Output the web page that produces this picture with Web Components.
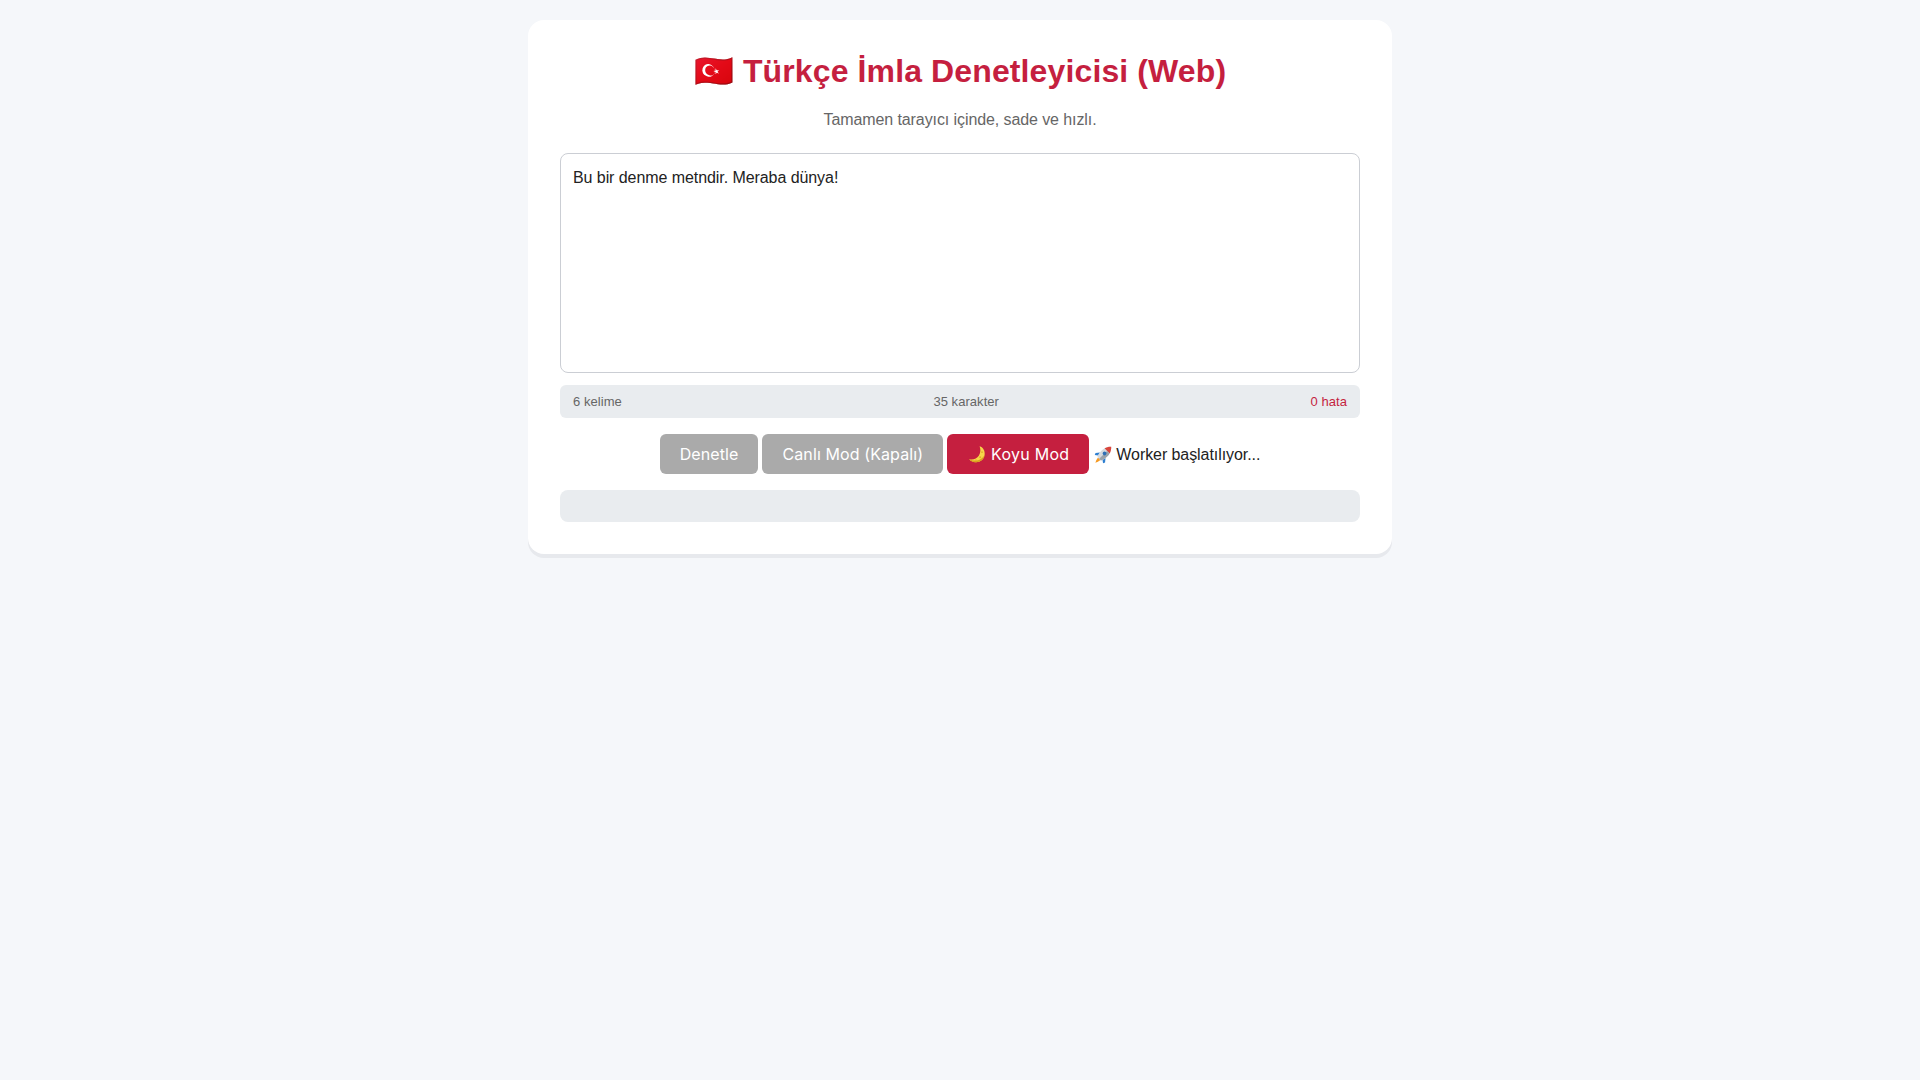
<!DOCTYPE html>
<html lang="tr">
<head>
<meta charset="utf-8">
<title>Türkçe İmla Denetleyicisi (Web)</title>
<style>
    html, body { margin: 0; height: 100%; }
    body {
        background: #f5f7fa;
        font-family: "Liberation Sans", Arial, sans-serif;
        font-size: 16px;
        color: #222;
    }
</style>
</head>
<body>
<spell-app></spell-app>

<script>
/* Kart: sayfanin ortasindaki beyaz kutu */
class SpellCard extends HTMLElement {
    constructor() {
        super();
        this.attachShadow({ mode: 'open' });
        this.shadowRoot.innerHTML = `
            <style>
                :host {
                    display: block;
                    box-sizing: border-box;
                    width: 864px;
                    margin: 20px auto 0;
                    padding: 32px;
                    background: #ffffff;
                    border-radius: 16px;
                    box-shadow: 0 4px 0 #e7e9ed;
                }
            </style>
            <slot></slot>
        `;
    }
}

class SpellHeader extends HTMLElement {
    constructor() {
        super();
        this.attachShadow({ mode: 'open' });
        this.shadowRoot.innerHTML = `
            <style>
                :host { display: block; text-align: center; }
                h1 {
                    margin: 0;
                    font-size: 32px;
                    line-height: 39px;
                    font-weight: 700;
                    letter-spacing: 0.12px;
                    color: #c51f3f;
                }
                p {
                    margin: 20px 0 0;
                    font-size: 16px;
                    line-height: 18px;
                    letter-spacing: -0.09px;
                    color: #666666;
                }
            </style>
            <h1><slot name="title"></slot></h1>
            <p><slot name="sub"></slot></p>
        `;
    }
}

class SpellEditor extends HTMLElement {
    constructor() {
        super();
        this.attachShadow({ mode: 'open' });
        this.shadowRoot.innerHTML = `
            <style>
                :host { display: block; margin-top: 24px; }
                textarea {
                    display: block;
                    box-sizing: border-box;
                    width: 800px;
                    height: 220px;
                    padding: 12px;
                    border: 1px solid #cbced4;
                    border-radius: 8px;
                    background: #ffffff;
                    color: #222222;
                    font-family: "Liberation Sans", Arial, sans-serif;
                    font-size: 16px;
                    line-height: 23px;
                    letter-spacing: -0.07px;
                    outline: none;
                    resize: none;
                }
            </style>
            <textarea spellcheck="false"></textarea>
        `;
    }
    connectedCallback() {
        this.shadowRoot.querySelector('textarea').value = this.getAttribute('value') || '';
    }
}

class SpellStats extends HTMLElement {
    constructor() {
        super();
        this.attachShadow({ mode: 'open' });
        this.shadowRoot.innerHTML = `
            <style>
                :host {
                    display: flex;
                    justify-content: space-between;
                    align-items: center;
                    height: 33px;
                    margin-top: 12px;
                    padding: 0 13px;
                    background: #e9ecef;
                    border-radius: 6px;
                    font-size: 13px;
                    letter-spacing: 0.05px;
                    color: #666666;
                }
                .err { color: #c51f3f; }
            </style>
            <span><slot name="words"></slot></span>
            <span><slot name="chars"></slot></span>
            <span class="err"><slot name="errors"></slot></span>
        `;
    }
}

// Ay ve roket simgeleri
const ICONS = {
    moon: `
        <path d="M10.6 .3 C14.4 1.6 16.2 5.2 15.6 9 C14.9 13.6 10.8 16.6 6.4 16.2 C3.8 16 1.4 14.9 .2 13.2 C4 14.2 7.8 12.8 9.8 9.8 C11.6 7 11.9 3.4 10.6 .3 Z" fill="#f7d64a"/>
        <path d="M.2 13.2 C1.4 14.9 3.8 16 6.4 16.2 C10.8 16.6 14.9 13.6 15.6 9 C13.6 12.6 9.8 14.8 6 14.6 C3.8 14.5 1.8 14 .2 13.2 Z" fill="#d8a21e"/>
        <circle cx="13" cy="6.2" r=".9" fill="#e0b02c"/>
        <circle cx="11.2" cy="11.2" r="1" fill="#e0b02c"/>
        <circle cx="7" cy="14" r=".7" fill="#e0b02c"/>
    `,
    rocket: `
        <g transform="rotate(45 8.5 8.5)">
            <path d="M4.6 9.5 L1.8 13 L2.6 15 L5.4 13 Z" fill="#2f7fd0"/>
            <path d="M12.4 9.5 L15.2 13 L14.4 15 L11.6 13 Z" fill="#2f7fd0"/>
            <path d="M6.8 14.5 L10.2 14.5 L9.6 17.5 L8.5 20 L7.4 17.5 Z" fill="#f59a23"/>
            <path d="M8.5 -2.4 C11.6 .4 12.6 4 12.6 7.4 C12.6 10 12 12.6 11 14.6 L6 14.6 C5 12.6 4.4 10 4.4 7.4 C4.4 4 5.4 .4 8.5 -2.4 Z" fill="#d5d9de"/>
            <path d="M8.5 -2.4 C10.4 -.7 11.5 1.3 12.1 3.4 L4.9 3.4 C5.5 1.3 6.6 -.7 8.5 -2.4 Z" fill="#d9453c"/>
            <path d="M8.5 3.4 L12.1 3.4 C12.5 4.7 12.6 6 12.6 7.4 C12.6 10 12 12.6 11 14.6 L8.5 14.6 Z" fill="#9aa2ab"/>
            <circle cx="8.5" cy="7" r="1.9" fill="#2f6fb5"/>
        </g>
    `
};

class SpellIcon extends HTMLElement {
    constructor() {
        super();
        this.attachShadow({ mode: 'open' });
    }
    connectedCallback() {
        const name = this.getAttribute('name');
        this.shadowRoot.innerHTML = `
            <style>
                :host { display: inline-block; width: 17px; height: 17px; }
                svg { display: block; overflow: visible; }
            </style>
            <svg width="17" height="17" viewBox="0 0 17 17" aria-hidden="true">${ICONS[name]}</svg>
        `;
    }
}

class SpellButton extends HTMLElement {
    constructor() {
        super();
        this.attachShadow({ mode: 'open' });
        this.shadowRoot.innerHTML = `
            <style>
                :host { display: block; }
                button {
                    display: flex;
                    align-items: center;
                    height: 40px;
                    padding: 0 20px;
                    border: 0;
                    border-radius: 6px;
                    background: #aaaaaa;
                    color: #ffffff;
                    font-family: Inter, "Liberation Sans", sans-serif;
                    font-size: 16px;
                    font-weight: 400;
                    letter-spacing: 0.1px;
                }
                :host([primary]) button {
                    gap: 5px;
                    background: #c51f3f;
                    letter-spacing: 0.25px;
                }
                ::slotted([slot="icon"]) { margin-left: 2px; }
            </style>
            <button><slot name="icon"></slot><slot></slot></button>
        `;
    }
}

class SpellToolbar extends HTMLElement {
    constructor() {
        super();
        this.attachShadow({ mode: 'open' });
        this.shadowRoot.innerHTML = `
            <style>
                :host {
                    display: flex;
                    justify-content: center;
                    align-items: center;
                    gap: 4px;
                    margin-top: 16px;
                }
                ::slotted(.status) {
                    display: flex;
                    align-items: center;
                    gap: 4px;
                    margin-left: 2px;
                    padding-top: 1px;
                    letter-spacing: -0.07px;
                }
            </style>
            <slot></slot>
        `;
    }
}

class SpellResults extends HTMLElement {
    constructor() {
        super();
        this.attachShadow({ mode: 'open' });
        this.shadowRoot.innerHTML = `
            <style>
                :host {
                    display: block;
                    height: 32px;
                    margin-top: 16px;
                    background: #e9ecef;
                    border-radius: 8px;
                }
            </style>
            <slot></slot>
        `;
    }
}

class SpellApp extends HTMLElement {
    constructor() {
        super();
        this.attachShadow({ mode: 'open' });
        this.shadowRoot.innerHTML = `
            <style>
                :host { display: block; padding-bottom: 20px; }
            </style>
            <spell-card>
                <spell-header>
                    <span slot="title">🇹🇷 Türkçe İmla Denetleyicisi (Web)</span>
                    <span slot="sub">Tamamen tarayıcı içinde, sade ve hızlı.</span>
                </spell-header>
                <spell-editor value="Bu bir denme metndir. Meraba dünya!"></spell-editor>
                <spell-stats>
                    <span slot="words">6 kelime</span>
                    <span slot="chars">35 karakter</span>
                    <span slot="errors">0 hata</span>
                </spell-stats>
                <spell-toolbar>
                    <spell-button>Denetle</spell-button>
                    <spell-button>Canlı Mod (Kapalı)</spell-button>
                    <spell-button primary><spell-icon slot="icon" name="moon"></spell-icon>Koyu Mod</spell-button>
                    <span class="status"><spell-icon name="rocket"></spell-icon>Worker başlatılıyor...</span>
                </spell-toolbar>
                <spell-results></spell-results>
            </spell-card>
        `;
    }
}

customElements.define('spell-card', SpellCard);
customElements.define('spell-header', SpellHeader);
customElements.define('spell-editor', SpellEditor);
customElements.define('spell-stats', SpellStats);
customElements.define('spell-icon', SpellIcon);
customElements.define('spell-button', SpellButton);
customElements.define('spell-toolbar', SpellToolbar);
customElements.define('spell-results', SpellResults);
customElements.define('spell-app', SpellApp);
</script>
</body>
</html>
